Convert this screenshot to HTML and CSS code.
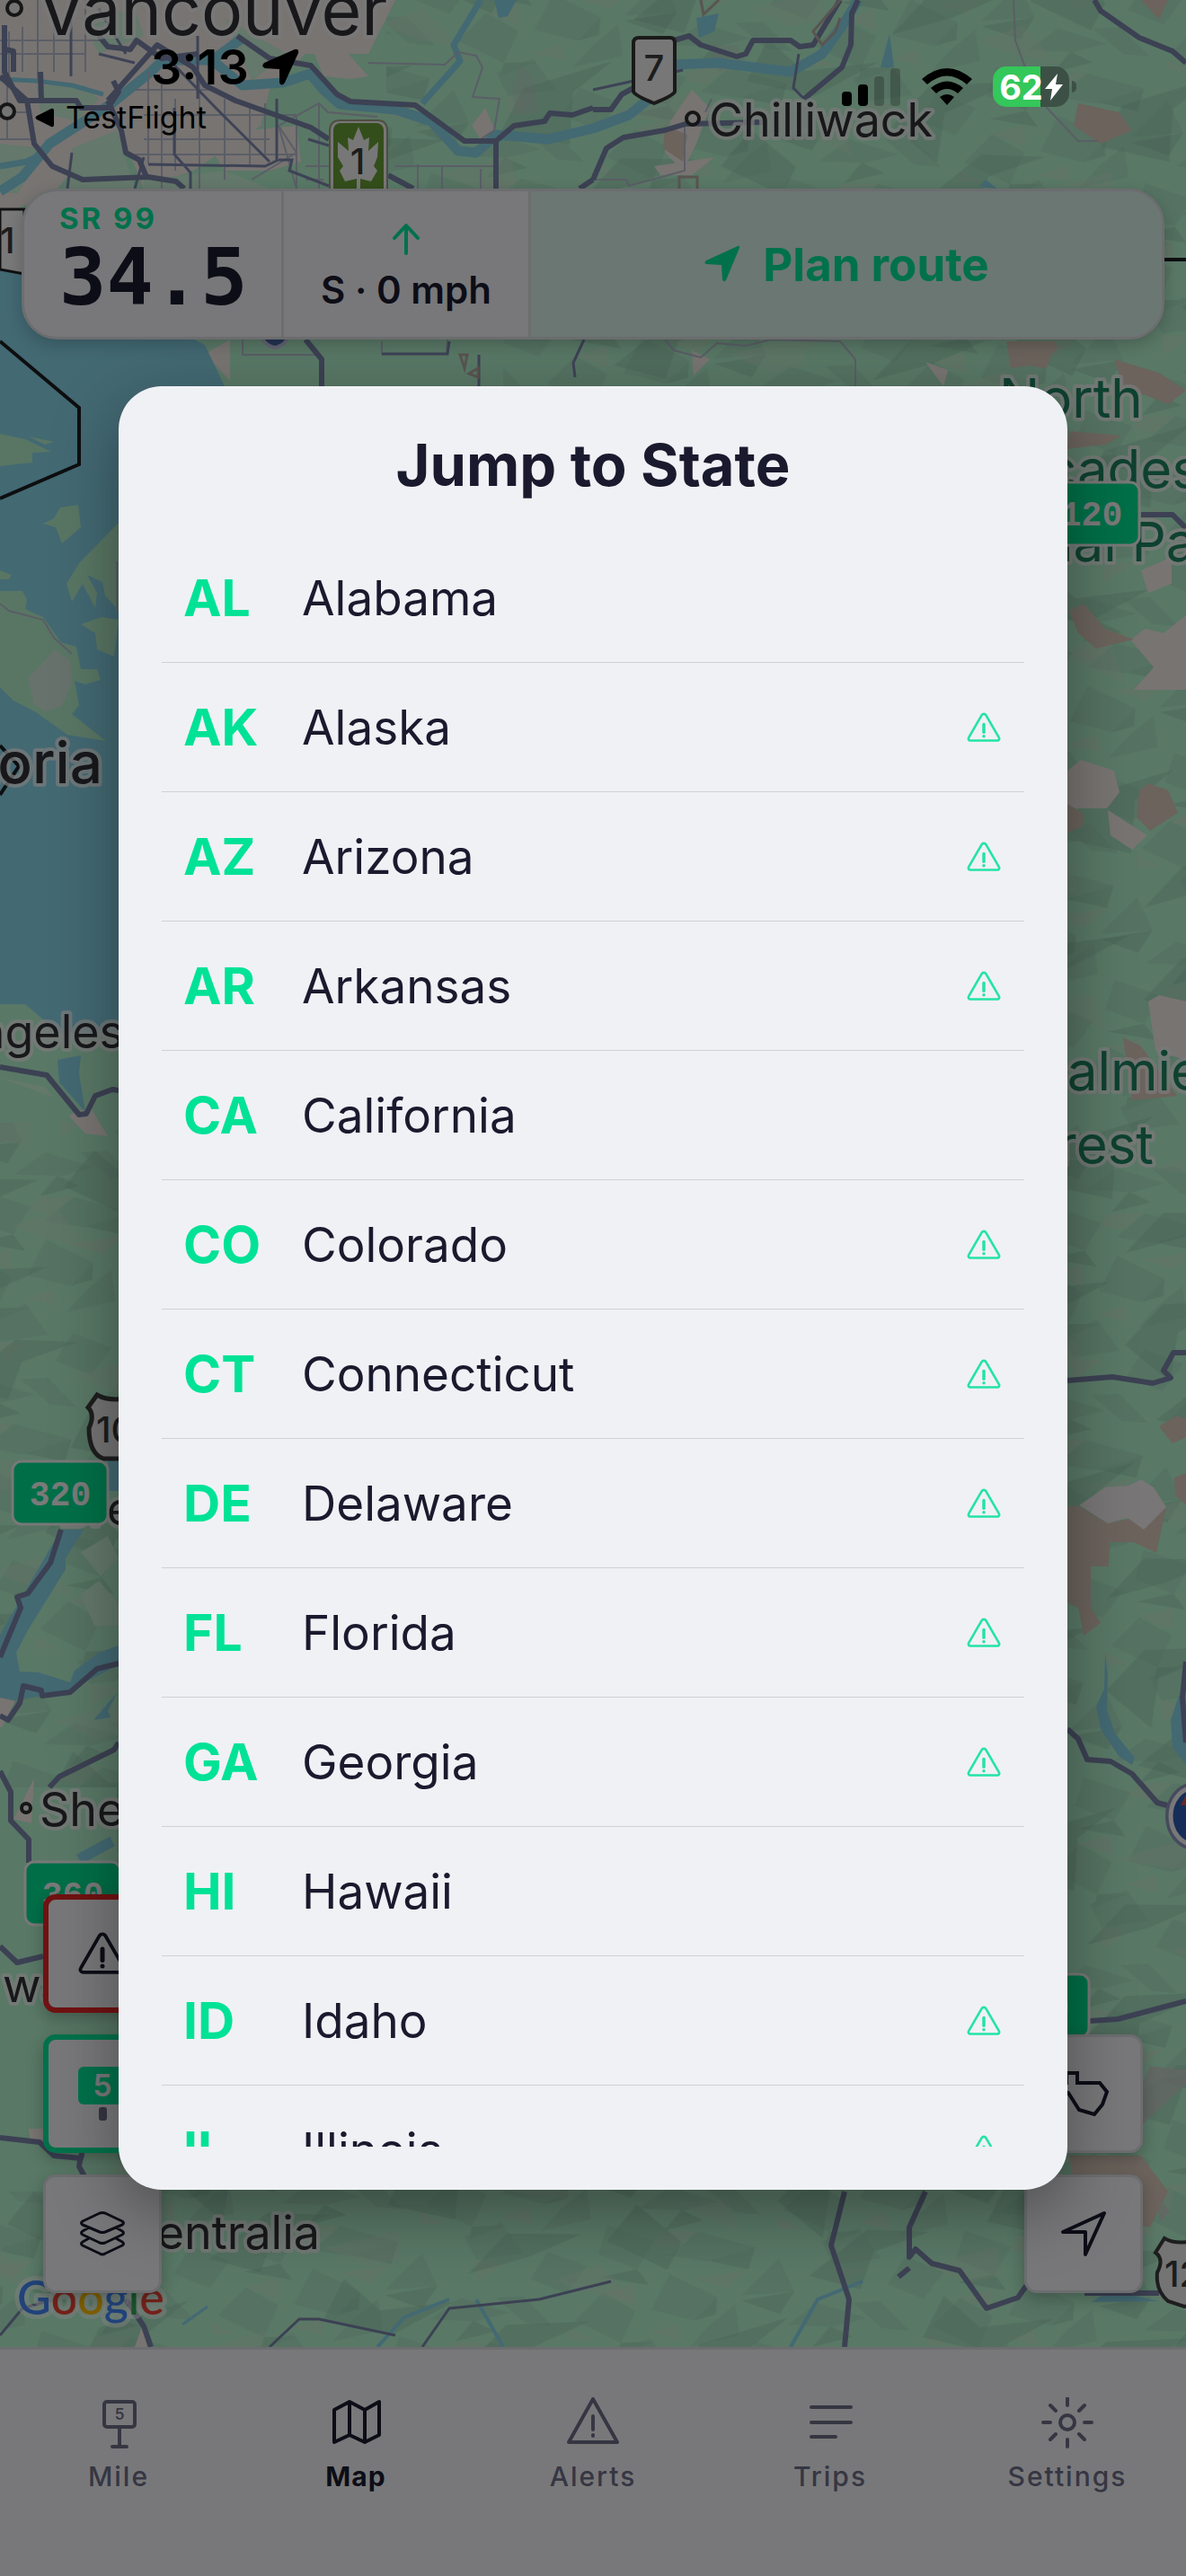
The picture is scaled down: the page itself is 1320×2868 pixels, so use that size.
FILE: index.html
```html
<!DOCTYPE html>
<html lang="en">
<head>
<meta charset="utf-8">
<meta name="viewport" content="width=device-width">
<title>Jump to State</title>
<link rel="stylesheet" href="styles.css">
</head>
<body>
<svg class="sprite" aria-hidden="true">
  <symbol id="warn" viewBox="0 0 24 24"><path d="M10.6 4.2a1.6 1.6 0 0 1 2.8 0l8.2 14.2a1.2 1.2 0 0 1-1.1 1.9h-17a1.2 1.2 0 0 1-1.1-1.9z" fill="none" stroke="currentColor" stroke-width="1.5" stroke-linejoin="round"/><path d="M12 10v5" stroke="currentColor" stroke-width="2" stroke-linecap="round"/><circle cx="12" cy="17.6" r="1" fill="currentColor"/></symbol>
</svg>

<div class="screen">
  <main class="map">
    <svg class="terrain" viewBox="0 0 1320 2613" preserveAspectRatio="xMidYMid slice" aria-label="Map">
      <defs>
        <pattern id="relief" width="210" height="240" patternUnits="userSpaceOnUse" patternTransform="rotate(38) skewX(-24)">
          <g fill="#a0d8bc">
            <path d="M6 20L50 0L40 30L12 60zM70 40L120 14L108 60L80 80zM146 8L190 26L164 66zM12 96L56 78L76 114L38 128zM100 96L152 84L164 120L128 140zM170 78L206 102L190 146L178 114zM6 160L44 146L62 184L26 196zM82 158L120 152L146 190L96 202zM158 166L204 178L184 216L152 204zM40 216L88 222L70 238L26 236z"/>
          </g>
          <g fill="#94c8ae">
            <path d="M38 32L62 26L50 62zM120 14L140 38L108 58zM190 26L206 56L170 70zM76 114L100 120L64 146zM152 84L170 100L164 120zM146 190L164 166L158 204z"/>
          </g>
          <g fill="#cfe4cc">
            <path d="M50 64L70 40L76 70L58 82zM140 38L148 70L120 82zM90 128L114 146L82 158zM158 134L178 146L152 162zM184 218L204 198L208 234zM100 212L128 206L114 222z"/>
          </g>
        </pattern>
        <pattern id="ridges" width="390" height="330" patternUnits="userSpaceOnUse" patternTransform="rotate(-28) skewX(30)">
          <path fill="#8cbfa6" d="M20 20L110 5L150 40L90 30L40 60zM200 60L260 30L350 50L290 60L230 110zM30 140L90 110L80 160L140 190L60 190zM180 170L250 150L300 190L240 185zM310 210L370 190L360 250L320 270zM80 260L150 240L210 280L130 275L70 320z"/>
          <path fill="#cbe6ce" d="M110 70L180 90L150 120L120 110zM290 100L370 120L330 150zM10 210L50 230L20 270zM230 220L280 230L260 290L240 250z"/>
        </pattern>
        <clipPath id="highland"><path d="M430 0H1320V2613H0V2440H130V1990H0V1250H132V1200H560V378H430z"/></clipPath>
      </defs>
      <rect width="1320" height="2613" fill="#b2f0cc"/>
      <g clip-path="url(#highland)">
        <rect width="1320" height="2613" fill="url(#relief)" opacity=".45"/>
        <rect width="1320" height="2613" fill="url(#ridges)" opacity=".35"/>
      </g>

      <!-- pale lowlands and built-up areas -->
      <g fill="#f0e8e4">
        <path d="M0 0H440L410 60L340 60L300 100L290 140L215 190L160 210L140 160L120 190L80 190L60 215L0 240z"/>
        <path d="M350 60L370 40L410 85L390 88L360 85zM225 150L330 140L335 180L300 190L250 190zM540 120L553 150L535 155L525 140zM746 135L770 100L790 120L775 160L760 190L740 170z"/>
        <path d="M728 185L795 175L770 195L735 195zM228 394L256 378V424zM770 390L790 400L772 418zM1030 403L1055 412L1050 430z"/>
        <path d="M1270 635L1304 620V650L1278 660zM1258 712L1275 700L1295 705L1320 685V768L1262 768L1284 743zM1188 858L1203 846L1240 858L1246 882L1232 900H1188zM1233 902L1277 930L1260 946L1236 930zM1278 1115L1290 1108L1320 1115V1180L1286 1170z"/>
        <path d="M76 1242L100 1232L120 1265L95 1262zM15 2025L38 1980L35 2030zM0 1890L17 1894L2 1923L0 1923zM32 2370H50V2385H34zM150 2613L158 2590L164 2613z"/>
      </g>
      <g fill="#c8f0d6">
        <path d="M40 95L95 95L110 110L85 135L45 125zM90 20L150 10L160 40L110 60zM80 165L130 145L150 210H75zM250 20L320 60L280 90zM0 160L50 165L20 215H0zM160 200L250 190L300 210H160zM90 1728L120 1710L132 1735L112 1755zM90 1775L110 1760L132 1785V1810L105 1810zM0 1200L50 1210L60 1222L0 1200z"/>
      </g>
      <g fill="#d6c6b8">
        <path d="M1240 400L1290 415L1320 435L1300 450L1250 430zM1120 380L1180 385L1160 405L1125 410zM1190 480L1248 485L1230 495L1188 500zM1190 680L1206 672L1230 700L1262 712L1220 722L1200 705zM1268 880L1278 872L1300 880L1311 905L1280 925L1265 910zM1188 895L1205 905L1205 920L1188 927zM1250 1155L1270 1165L1310 1220L1260 1225zM1200 115L1245 125L1260 145L1225 160L1195 140zM1190 2400H1270L1300 2440L1280 2480L1240 2470L1195 2430zM1125 380H1175L1165 410L1130 405zM740 140L765 150L760 180L738 165zM1290 1588L1310 1576L1320 1580V1600L1305 1607zM1307 1645L1320 1640V1675L1308 1665zM1270 0H1300L1290 22z"/>
        <path d="M1188 1677H1201L1233 1696L1262 1690L1298 1678L1287 1729L1262 1717H1235L1234 1744H1214V1789L1225 1807L1206 1821L1200 1790L1188 1784z"/>
      </g>
      <path d="M1201 1676L1230 1656L1256 1654L1270 1647L1284 1656L1298 1678L1273 1703L1255 1690L1233 1696z" fill="#f0ecec"/>
      <g fill="#c8ccc8"><path d="M1272 2318L1280 2300L1320 2305V2320L1272 2365zM1290 2448L1302 2462L1290 2475z" opacity=".8"/><path d="M790 50L820 50L830 70L800 80zM570 100L580 70L595 90L598 125L575 128z" opacity=".35"/></g>

      <!-- sea and islands -->
      <path d="M0 300H60L228 384L250 430H260V700L140 1150H66L28 1118H0z" fill="#86d2e6"/>
      <path d="M64 1180L90 1175L88 1195L95 1238L66 1205zM120 1625H132V1660H121zM68 1703H93L73 1735V1747L31 1815L18 1840L22 1861L43 1862L78 1873L83 1860L110 1840L132 1832V1854L80 1880L48 1888L17 1893L0 1890V1820z" fill="#86d2e6"/>
      <g fill="#b2ecc8">
        <path d="M0 483L28 489L57 503L36 504V515L0 519zM32 486L60 492L50 495zM48 583L60 577L67 565L87 562L90 587L69 605L62 587zM74 650L88 627L132 582V680L117 663L114 648L97 640L108 660L106 677L92 650L80 670zM90 695L113 687L132 690L127 731L108 723L106 705z"/>
        <path d="M0 658L25 658L30 668L28 678L48 687L68 715L85 720L90 745L108 745L112 757L95 762L83 758L88 785L80 795L118 825L75 818L40 793L15 780L0 765zM0 635L13 640L10 645H0z"/>
      </g>
      <path d="M31 755L50 735L60 723L78 735L80 760L70 785L52 792L38 785z" fill="#cfe4d8"/>

      <!-- rivers and lakes -->
      <g fill="none" stroke="#86d2e6" stroke-width="11" stroke-linejoin="round">
        <path d="M0 213L25 197L55 160L122 117L168 80L181 67H236L269 43"/>
        <path d="M236 67L270 95L315 92L345 82L360 100L378 116L440 122L480 135L510 168L530 170L552 150L610 155L660 143L700 128L735 100L752 72L800 70L880 80L915 60L940 25L955 0"/>
        <path d="M0 88L40 90L80 95L115 105" stroke-width="5"/><path d="M0 185L30 180L50 170" stroke-width="7"/>
        <path d="M535 0L505 50L512 68L470 115" stroke-width="7"/>
        <path d="M88 2070L125 2050" stroke-width="12"/>
        <path d="M420 2613L450 2580L500 2560M560 2613L530 2560M880 2613L910 2560L960 2540" stroke-width="4"/>
        <path d="M203 2588L231 2568" stroke-width="3"/>
      </g>
      <path d="M550 0H575L565 18L555 20zM775 20L800 15L795 35L778 42zM980 75L990 38L995 75zM1090 208L1097 200L1110 210zM1215 2563L1235 2550L1290 2562zM104 1915L130 1885L120 1905L123 1912zM1230 1840L1233 1865L1232 1903L1241 1930L1263 1957L1260 1965L1245 1955L1225 1925L1220 1900L1229 1880zM1320 1890L1312 1888L1303 1915L1305 1945L1320 1965z" fill="#86d2e6"/>

      <!-- street grid -->
      <g fill="none" stroke="#b4bccc" stroke-width="2">
        <path d="M0 45H110M0 60H95M10 35V85M25 30V80M42 0V90M60 0V80M95 0V80M0 155H38M0 125H30M8 90V155M165 80V182M180 85V210M222 90V210M250 110V200M278 120V185M295 115V175M150 100H240M160 128H330M160 155H300M150 172H330M195 110V190M310 140L330 210M330 130V210M355 115V210M340 185H432M340 200H360"/>
        <path d="M280 200L330 170L310 140L355 115L365 125L420 130M410 70L495 72L510 58L530 62L537 75L526 108L556 110L550 145L535 155M440 185H550M465 183V210M492 185V210M535 188V210M1128 0L1130 45L1141 75L1165 120L1200 157H1222M660 200H697L700 207L762 190V140M792 110L785 125"/>
        <path d="M0 672L10 680L48 690L60 710L80 728M130 625V680M270 378V395H355M498 378L497 394H425V380M740 378L750 390L780 398L798 382L830 385L858 378L935 380M935 380L952 400V430"/>
      </g>
      <g fill="none" stroke="#7c86ac" stroke-width="3">
        <path d="M79 0V85M110 10L140 60M110 60L150 70M182 60L240 120L300 180M165 183L295 185L310 178M194 120V172L212 192V210M308 110V178M220 110V40M310 178H325L322 190L366 207M343 155L366 162M75 210L80 170M660 100L760 78M425 394H498L500 380M640 420L638 404L650 378M533 395V430M889 60L883 98L895 110M160 175L150 210"/>
      </g>
      <g fill="none" stroke="#7882a6" stroke-width="6" stroke-linejoin="round">
        <path d="M0 85L30 112L38 160L58 185L92 200L165 197L196 202L205 210M5 28V80L22 112H85L90 120H120L132 102L126 90M6 55L15 57V80M45 80L46 112M120 112L135 145L140 170L155 178L163 197M120 112L175 50L215 75L228 95L262 112L346 142L366 155M110 40L120 52L145 55L152 45L180 65L220 60M264 40L300 65L346 73L375 105L390 113L462 117L517 157H552L572 140L606 135L612 126L637 128L660 120"/>
        <path d="M660 122H680L692 105L720 90M750 45L767 40L780 50L820 63L830 60L838 45H880L890 52L905 50L935 0M895 110L937 75L947 50L948 15L955 0M660 200L675 165L694 153L740 145L763 138L850 136M432 195L460 210M552 157V210M1218 0L1225 12L1268 42L1305 57L1320 70M660 200L645 210M340 378L358 400V430M1270 573H1305L1320 588"/>
        <path d="M0 1188L52 1197L88 1241L96 1240L106 1220L125 1213L132 1214M68 1703L56 1740L31 1774L19 1778L23 1790L0 1845M0 1910L9 1915L22 1896L26 1877L46 1882L47 1888L78 1884L108 1858L132 1852M132 1940L127 1948L66 1978L55 1990M0 1972L12 1995V2027L32 2048V2074M0 2167L19 2185L48 2178M0 2380L44 2385L60 2400L90 2403L95 2380M90 2400L88 2412L95 2425M140 2560L160 2590L168 2613"/>
        <path d="M1030 2440L1012 2480V2513L1019 2504L1037 2520L1068 2528L1098 2570L1133 2558L1142 2545M1000 2535L1012 2525M1207 2553H1290M1213 2250L1244 2248L1320 2228M940 2613L945 2560L925 2500L940 2440M1188 1537L1238 1533L1283 1540L1303 1534L1295 1526L1306 1506H1320M1188 1925L1200 1936L1210 1959L1236 1961L1260 1975L1288 2007L1310 2013M1320 1850L1316 1890L1320 1940"/>
        <path d="M300 2613L333 2582H355L440 2600M470 2613L500 2570L600 2560L680 2540M0 2600L25 2570L60 2560" stroke-width="3"/>
      </g>
      <g fill="none" stroke="#b4a8a0" stroke-width="3"><path d="M780 0L783 16L800 0M935 0L905 35L915 50L930 35L935 20M756 210V197H776V210M512 395H520L517 410zM522 416L532 410V420z"/></g>
      <path d="M0 380L88 454V517L0 555M0 830L21 853L0 885M1296 289H1320" fill="none" stroke="#1c1c20" stroke-width="4"/>

      <!-- route shields -->
      <path d="M711 42H746Q751 42 751 48V102Q750 106 728 115Q706 106 705 102V48Q705 42 711 42" fill="#f0eeee" stroke="#343434" stroke-width="4"/>
      <path d="M367 215V146Q367 134 379 134H420Q431 134 431 146V215z" fill="#f0eeee" stroke="#9a9e80" stroke-width="2"/>
      <rect x="371" y="137" width="56" height="90" rx="8" fill="#669c36"/>
      <path d="M399 141L405 156L411 153L410 168L421 158L420 175L416 185L420 190L413 202L401 199V210H397V199L384 202L378 190L382 185L376 175V158L388 168L387 153L393 156z" fill="#efeeee"/>
      <path d="M0 233H27V305L0 300z" fill="#f4f2f2" stroke="#222" stroke-width="3"/>
      <path d="M290 370H322Q320 384 306 387Q292 384 290 370" fill="#4868a8" stroke="#c4c8e4" stroke-width="4"/>
      <path d="M108 1553Q120 1560 140 1557L170 1555L175 1565V1600L165 1624H115Q99 1618 99 1590Q106 1575 98 1567z" fill="#e8e8e8" stroke="#3c3c3c" stroke-width="5"/>
      <path d="M1296 2492Q1310 2500 1330 2494V2566L1318 2568L1300 2562Q1286 2550 1288 2530Q1296 2515 1286 2508z" fill="#e8e8e8" stroke="#3c3c3c" stroke-width="4"/>
      <path d="M1330 1990A27 32 0 0 0 1330 2054" fill="#2c5cae" stroke="#8c94b8" stroke-width="12"/>
      <path d="M1330 1990A27 32 0 0 0 1330 2054" fill="#2c5cae" stroke="#f0f0f4" stroke-width="5"/>
      <path d="M1314 2010L1320 1998V2010z" fill="#d05050"/>
      <g class="shield-text">
        <text x="728" y="90" text-anchor="middle">7</text><text x="398" y="194" text-anchor="middle">1</text><text x="0" y="282">1</text><text x="107" y="1606">101</text><text x="1296" y="2546">12</text>
      </g>

      <g fill="#e8e8e8" stroke="#2c2c2c" stroke-width="4"><circle cx="16" cy="9" r="8"/><circle cx="8" cy="124" r="8"/><circle cx="771" cy="132" r="7"/><circle cx="29" cy="2013" r="5"/></g>

      <!-- place names -->
      <g class="place">
        <text class="city" x="42" y="39">Vancouver</text>
        <text x="789" y="152">Chilliwack</text>
        <text class="capital" x="114" y="872" text-anchor="end">Victoria</text>
        <text x="138" y="1167" text-anchor="end">Port Angeles</text>
        <text x="66" y="1698">Bremerton</text>
        <text x="44" y="2033">Shelton</text>
        <text x="3" y="2229">wa</text>
        <text x="356" y="2504" text-anchor="end">Centralia</text>
      </g>
      <g class="place park">
        <text x="1112" y="465">North</text><text x="1336" y="544" text-anchor="end">Cascades</text><text x="1388" y="625" text-anchor="end">National Park</text>
        <text x="1338" y="1214" text-anchor="end">Snoqualmie</text><text x="1284" y="1296" text-anchor="end">Forest</text>
      </g>
      <text class="google" x="19" y="2577"><tspan fill="#4285f4">G</tspan><tspan fill="#ea4335">o</tspan><tspan fill="#fbbc05">o</tspan><tspan fill="#4285f4">g</tspan><tspan fill="#34a853">l</tspan><tspan fill="#ea4335">e</tspan></text>

      <!-- mile markers -->
      <g class="marker">
        <rect x="14" y="1627" width="106" height="70" rx="10"/><text x="67" y="1676">320</text>
        <rect x="28" y="2073" width="106" height="70" rx="10"/><text x="81" y="2122">360</text>
        <rect x="1162" y="537" width="106" height="70" rx="10"/><text x="1215" y="585">120</text>
        <rect x="1106" y="2198" width="106" height="70" rx="10"/><text x="1156" y="2247">100</text>
      </g>
    </svg>

    <section class="hud">
      <div class="hud-mile"><span class="route">SR 99</span><span class="mile">34.5</span></div>
      <div class="hud-speed">
        <svg width="36" height="42" viewBox="0 0 36 42" fill="none" stroke="currentColor" stroke-width="4" stroke-linecap="round" stroke-linejoin="round"><path d="M18 37V7M5 20L18 6L31 20"/></svg>
        <span>S · 0 mph</span>
      </div>
      <button class="plan" type="button">
        <svg width="42" height="42" viewBox="0 0 42 42" fill="currentColor"><path d="M38 1Q41 0 40 3L25 39Q22 42 21 38L20 22L3 21Q0 20 3 17z"/></svg>
        <span>Plan route</span>
      </button>
    </section>

    <div class="controls">
      <div class="stack">
        <button class="tool tool-alert" type="button" aria-label="Alerts"><svg width="60" height="60"><use href="#warn"/></svg></button>
        <button class="tool tool-marker" type="button" aria-label="Mile markers"><span class="sign">5</span><span class="post"></span></button>
        <button class="tool" type="button" aria-label="Layers"><svg width="54" height="54" viewBox="0 0 54 54" fill="none" stroke="currentColor" stroke-width="3" stroke-linejoin="round"><path d="M24 4Q27 3 30 4L49 13Q52 15 49 17L30 25Q27 26 24 25L5 17Q2 15 5 13zM12 20L5 24Q2 26 5 28L24 37Q27 38 30 37L49 28Q52 26 49 24L42 20M12 32L5 36Q2 38 5 40L24 49Q27 51 30 49L49 40Q52 38 49 36L42 32"/></svg></button>
      </div>
      <div class="stack">
        <button class="tool" type="button" aria-label="Jump to state"><svg width="60" height="54" viewBox="0 0 60 54" fill="none" stroke="currentColor" stroke-width="4"><path d="M11 4H23V15H48L56 25L51 39L42 50L25 45L13 26L4 24V15H11z"/></svg></button>
        <button class="tool" type="button" aria-label="My location"><svg width="54" height="54" viewBox="0 0 54 54" fill="none" stroke="currentColor" stroke-width="4" stroke-linejoin="round"><path d="M50 4L4 25H29V50z"/></svg></button>
      </div>
    </div>
  </main>

  <nav class="tabs">
    <a href="#mile" class="tab"><svg width="60" height="60" viewBox="0 0 60 60" fill="none" stroke="currentColor" stroke-width="4" stroke-linecap="round"><rect x="14" y="5" width="34" height="28" rx="3"/><path d="M31 33V55M23 55H39"/><text class="tab-glyph" x="31" y="25">5</text></svg><span>Mile</span></a>
    <a href="#map" class="tab active" aria-current="page"><svg width="60" height="60" viewBox="0 0 60 60" fill="none" stroke="currentColor" stroke-width="4" stroke-linejoin="round"><path d="M6 14L23 5L40 14L56 5V42L40 50L23 42L6 50zM23 5V42M40 14V50"/></svg><span>Map</span></a>
    <a href="#alerts" class="tab"><svg width="60" height="60" viewBox="0 0 60 60" fill="none" stroke="currentColor" stroke-width="4" stroke-linejoin="round" stroke-linecap="round"><path d="M30 2L57 50H3zM30 21V36M30 42V43"/></svg><span>Alerts</span></a>
    <a href="#trips" class="tab"><svg width="60" height="60" viewBox="0 0 60 60" fill="none" stroke="currentColor" stroke-width="4" stroke-linecap="round"><path d="M9 11H53M9 28H53M9 44H36"/></svg><span>Trips</span></a>
    <a href="#settings" class="tab"><svg width="60" height="60" viewBox="0 0 60 60" fill="none" stroke="currentColor" stroke-width="4" stroke-linecap="round"><circle cx="30" cy="28" r="8"/><path d="M30 1V9M30 47V55M3 28H11M49 28H57M11 9L17 15M43 41L49 47M49 9L43 15M17 41L11 47"/></svg><span>Settings</span></a>
  </nav>

  <div class="backdrop">
    <section class="sheet" role="dialog" aria-modal="true" aria-labelledby="sheet-title">
      <h1 id="sheet-title">Jump to State</h1>
      <ul class="states">
        <li><button type="button"><b>AL</b><span>Alabama</span></button></li>
        <li><button type="button"><b>AK</b><span>Alaska</span><svg class="flag"><use href="#warn"/></svg></button></li>
        <li><button type="button"><b>AZ</b><span>Arizona</span><svg class="flag"><use href="#warn"/></svg></button></li>
        <li><button type="button"><b>AR</b><span>Arkansas</span><svg class="flag"><use href="#warn"/></svg></button></li>
        <li><button type="button"><b>CA</b><span>California</span></button></li>
        <li><button type="button"><b>CO</b><span>Colorado</span><svg class="flag"><use href="#warn"/></svg></button></li>
        <li><button type="button"><b>CT</b><span>Connecticut</span><svg class="flag"><use href="#warn"/></svg></button></li>
        <li><button type="button"><b>DE</b><span>Delaware</span><svg class="flag"><use href="#warn"/></svg></button></li>
        <li><button type="button"><b>FL</b><span>Florida</span><svg class="flag"><use href="#warn"/></svg></button></li>
        <li><button type="button"><b>GA</b><span>Georgia</span><svg class="flag"><use href="#warn"/></svg></button></li>
        <li><button type="button"><b>HI</b><span>Hawaii</span></button></li>
        <li><button type="button"><b>ID</b><span>Idaho</span><svg class="flag"><use href="#warn"/></svg></button></li>
        <li><button type="button"><b>IL</b><span>Illinois</span><svg class="flag"><use href="#warn"/></svg></button></li>
      </ul>
    </section>
  </div>

  <header class="status">
    <div class="status-left">
      <div class="clock"><span>3:13</span><svg width="42" height="42" viewBox="0 0 42 42"><path d="M37 1Q42 0 41 5L26 38Q22 43 20 38V23L4 22Q-1 20 3 16z"/></svg></div>
      <a class="back" href="#testflight"><svg width="22" height="22" viewBox="0 0 22 22"><path d="M2 9L18 1Q21 0 21 3V19Q21 22 18 21L2 13Q-1 11 2 9z"/></svg><span>TestFlight</span></a>
    </div>
    <div class="status-right">
      <svg width="66" height="42" viewBox="0 0 66 42"><rect y="26" width="11" height="16" rx="4"/><rect x="18" y="18" width="11" height="24" rx="4"/><g opacity=".22"><rect x="36" y="9" width="11" height="33" rx="4"/><rect x="54" width="11" height="42" rx="4"/></g></svg>
      <svg width="58" height="42" viewBox="0 0 58 42"><path d="M1 12Q29 -12 57 12L51 18Q29 -1 7 18zM11 22Q29 7 47 22L41 28Q29 18 17 28zM21 32Q29 26 37 32L29 41z"/></svg>
      <div class="battery"><span>62</span><svg width="20" height="30" viewBox="0 0 20 30"><path d="M14 0L0 17H8L6 30L20 12H12z" fill="#fff"/></svg></div>
    </div>
  </header>
</div>
</body>
</html>
```
FILE: styles.css
```css
:root {
  --ink: #1a1a2e;
  --muted: #6c6c86;
  --surface: #f0f1f5;
  --line: #d8dade;
  --accent: #00e296;
}

* { box-sizing: border-box; }

body {
  margin: 0;
  font-family: Inter, "Liberation Sans", sans-serif;
  color: var(--ink);
}

button {
  margin: 0;
  padding: 0;
  border: 0;
  background: none;
  color: inherit;
  font: inherit;
}

.sprite { position: absolute; width: 0; height: 0; }

.screen {
  position: relative;
  display: flex;
  flex-direction: column;
  height: 100vh;
  overflow: hidden;
}

/* Map */
.map {
  position: relative;
  flex: 1;
  display: flex;
  flex-direction: column;
  justify-content: space-between;
  padding: 210px 24px 60px;
  overflow: hidden;
}

.terrain { position: absolute; inset: 0; width: 100%; height: 100%; }

.place text {
  font-size: 52px;
  fill: #303036;
  stroke: #f4f4f4;
  stroke-opacity: .75;
  stroke-width: 8px;
  stroke-linejoin: round;
  paint-order: stroke;
}
.place .city { font-size: 77px; }
.place .capital { font-size: 64px; font-weight: 500; }
.park text { fill: #1c8260; font-size: 60px; }
.shield-text { font-size: 40px; font-weight: 500; fill: #3a3a3a; }

.google {
  font-family: Lato, Inter, sans-serif;
  font-size: 52px;
  font-weight: 500;
  stroke: #fff;
  stroke-opacity: .5;
  stroke-width: 10px;
  stroke-linejoin: round;
  paint-order: stroke;
}

.marker rect { fill: #00de90; stroke: #f0f0f0; stroke-width: 3px; }
.marker text {
  font: bold 38px "Liberation Mono", monospace;
  fill: #f4f4f4;
  text-anchor: middle;
}

/* Top readout */
.hud {
  position: relative;
  display: grid;
  grid-template-columns: 289px 275px 1fr;
  height: 168px;
  border: 3px solid var(--line);
  border-radius: 40px;
  background: var(--surface);
  overflow: hidden;
  box-shadow: 0 6px 18px rgba(0, 0, 0, .2);
}
.hud-mile, .hud-speed { display: flex; flex-direction: column; border-right: 3px solid var(--line); }
.hud-mile { padding: 12px 0 0 39px; }
.route { font-size: 33px; line-height: 36px; font-weight: 700; letter-spacing: 3px; color: var(--accent); }
.mile { font: bold 87px/96px "DejaVu Sans Mono", monospace; }
.hud-speed { align-items: center; padding-top: 32px; gap: 12px; }
.hud-speed svg { color: var(--accent); }
.hud-speed span { font-size: 42px; line-height: 48px; font-weight: 600; }
.plan {
  display: flex;
  align-items: center;
  justify-content: center;
  gap: 24px;
  background: #d6eee6;
  color: var(--accent);
  font-size: 51px;
  font-weight: 700;
}

/* Floating map tools */
.controls {
  position: relative;
  display: flex;
  justify-content: space-between;
  align-items: flex-end;
  padding: 0 24px;
}
.stack { display: flex; flex-direction: column; gap: 24px; }
.tool {
  display: flex;
  flex-direction: column;
  align-items: center;
  justify-content: center;
  gap: 3px;
  width: 132px;
  height: 132px;
  border: 3px solid var(--line);
  border-radius: 14px;
  background: var(--surface);
  box-shadow: 0 6px 18px rgba(0, 0, 0, .25);
}
.tool-alert { border: 6px solid #e02424; }
.tool-marker { border: 6px solid var(--accent); }
.sign {
  width: 54px;
  height: 42px;
  border-radius: 6px;
  background: var(--accent);
  color: var(--surface);
  font-size: 34px;
  line-height: 42px;
  font-weight: 600;
  text-align: center;
}
.post { width: 9px; height: 15px; border-radius: 3px; background: var(--muted); }

/* Tab bar */
.tabs {
  display: grid;
  grid-template-columns: repeat(5, 1fr);
  height: 255px;
  border-top: 3px solid var(--line);
  background: var(--surface);
}
.tab {
  display: flex;
  flex-direction: column;
  align-items: center;
  gap: 10px;
  padding-top: 53px;
  color: var(--muted);
  font-size: 30px;
  line-height: 36px;
  font-weight: 500;
  letter-spacing: 2px;
  text-decoration: none;
}
.active { color: var(--ink); font-weight: 700; letter-spacing: 1px; }
.tab-glyph { font-size: 17px; font-weight: 600; letter-spacing: 0; fill: currentColor; stroke: none; text-anchor: middle; }

/* State picker */
.backdrop {
  position: absolute;
  inset: 0;
  display: grid;
  place-items: center;
  background: rgba(0, 0, 0, .5);
}
.sheet {
  display: flex;
  flex-direction: column;
  width: 80%;
  height: 70vh;
  padding: 48px;
  border-radius: 48px;
  background: var(--surface);
  box-shadow: 0 24px 72px rgba(0, 0, 0, .35);
}
h1 {
  margin: 0 0 36px;
  font-size: 65px;
  line-height: 80px;
  font-weight: 700;
  text-align: center;
}
.states {
  flex: 1;
  min-height: 0;
  margin: 0;
  padding: 0;
  list-style: none;
  overflow-y: auto;
  scrollbar-width: none;
}
.states li { border-bottom: 1px solid #cfd1d6; }
.states button {
  display: flex;
  align-items: center;
  gap: 24px;
  width: 100%;
  height: 143px;
  padding: 0 24px;
  text-align: left;
}
.states b { width: 108px; font-size: 57px; font-weight: 700; color: var(--accent); }
.states span { flex: 1; font-size: 53px; }
.flag { width: 42px; height: 42px; color: var(--accent); opacity: .85; }

/* System status bar */
.status {
  position: absolute;
  inset: 0 0 auto;
  display: flex;
  justify-content: space-between;
  padding: 45px 122px 0 39px;
  color: #000;
}
.clock { display: flex; align-items: center; gap: 14px; padding-left: 129px; font-size: 54px; line-height: 60px; font-weight: 600; }
.back { display: flex; align-items: center; gap: 12px; margin-top: 6px; color: inherit; font-size: 34px; line-height: 40px; text-decoration: none; }
.status-right { display: flex; align-items: center; align-self: flex-start; gap: 22px; padding-top: 29px; }
.battery {
  position: relative;
  display: flex;
  align-items: center;
  justify-content: center;
  gap: 2px;
  width: 85px;
  height: 45px;
  margin-right: 8px;
  border-radius: 15px;
  background: linear-gradient(90deg, #34c759 53px, #3c5046 53px);
  color: #fff;
  font-size: 38px;
  font-weight: 700;
}
.battery::after {
  content: "";
  position: absolute;
  left: 88px;
  width: 5px;
  height: 13px;
  border-radius: 0 5px 5px 0;
  background: #3c5046;
}
```
